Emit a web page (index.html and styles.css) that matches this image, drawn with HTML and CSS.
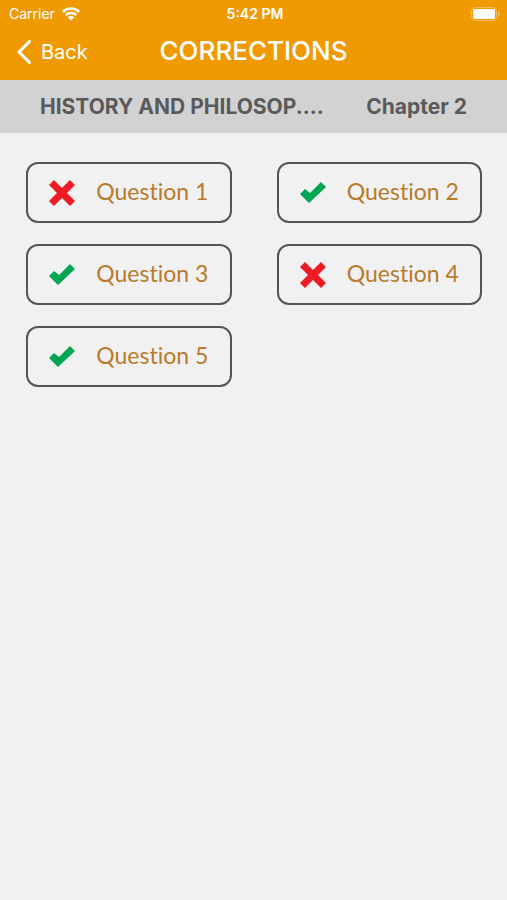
FILE: index.html
```
<!DOCTYPE html>
<html lang="en">
  <head>
    <meta charset="utf-8">
    <meta name="viewport" content="width=device-width, initial-scale=1">
    <title>Corrections</title>
    <link rel="stylesheet" href="styles.css">
  </head>
  <body>
    <!-- Icons shared by the question buttons -->
    <svg class="icon-defs" aria-hidden="true">
      <symbol id="icon-wrong" viewBox="0 0 26 26">
        <path d="M5 0L13 8L21 0L26 5L18 13L26 21L21 26L13 18L5 26L0 21L8 13L0 5Z"/>
      </symbol>
      <symbol id="icon-right" viewBox="0 0 26 26">
        <path d="M0 14L5 9L10 13L21 2L26 7L9 23Z"/>
      </symbol>
    </svg>

    <header class="header">
      <div class="status">
        <div class="status-left">
          <span>Carrier</span>
          <svg class="wifi" viewBox="0 0 18 14" aria-hidden="true">
            <path d="M0.8 4.9C5.4 0.4 12.6 0.4 17.2 4.9M3.7 8C6.7 5.2 11.3 5.2 14.3 8" fill="none" stroke="#fff" stroke-width="2.5"/>
            <path d="M5.7 10.3C7.6 8.6 10.4 8.6 12.3 10.3L9 13.6Z" fill="#fff"/>
          </svg>
        </div>
        <span class="time">5:42 PM</span>
        <svg class="battery" viewBox="0 0 30 14" aria-hidden="true">
          <rect x="0.5" y="0.5" width="25" height="13" rx="4" fill="none" stroke="#fff" stroke-opacity="0.35"/>
          <rect x="2" y="2" width="22" height="10" rx="2" fill="#fff"/>
          <path d="M27 5C29.4 5.6 29.4 8.4 27 9Z" fill="#fff" fill-opacity="0.4"/>
        </svg>
      </div>
      <div class="nav">
        <button class="back" type="button">
          <svg class="chevron" viewBox="0 0 14 24" aria-hidden="true">
            <path d="M12.5 1.5L2 12L12.5 22.5" fill="none" stroke="#fff" stroke-width="3" stroke-linecap="round" stroke-linejoin="round"/>
          </svg>
          <span>Back</span>
        </button>
        <h1 class="title">CORRECTIONS</h1>
      </div>
    </header>

    <div class="subject">
      <span>HISTORY AND PHILOSOP....</span>
      <span>Chapter 2</span>
    </div>

    <main class="questions">
      <button class="question" type="button">
        <svg class="mark wrong" aria-hidden="true"><use href="#icon-wrong"/></svg>
        <span class="label">Question 1</span>
      </button>
      <button class="question" type="button">
        <svg class="mark right" aria-hidden="true"><use href="#icon-right"/></svg>
        <span class="label">Question 2</span>
      </button>
      <button class="question" type="button">
        <svg class="mark right" aria-hidden="true"><use href="#icon-right"/></svg>
        <span class="label">Question 3</span>
      </button>
      <button class="question" type="button">
        <svg class="mark wrong" aria-hidden="true"><use href="#icon-wrong"/></svg>
        <span class="label">Question 4</span>
      </button>
      <button class="question" type="button">
        <svg class="mark right" aria-hidden="true"><use href="#icon-right"/></svg>
        <span class="label">Question 5</span>
      </button>
    </main>
  </body>
</html>
```
FILE: styles.css
```
* {
  box-sizing: border-box;
}

body {
  margin: 0;
  background-color: #f1f1f1;
  font-family: Inter, "Liberation Sans", sans-serif;
}

button {
  border: none;
  background: none;
  padding: 0;
  font: inherit;
  cursor: pointer;
}

svg {
  display: block;
  flex-shrink: 0;
}

/* Holds the symbols only, takes no space */
.icon-defs {
  position: absolute;
  width: 0;
  height: 0;
}

/* Orange header */
.header {
  background-color: #f09a03;
  color: #fff;
  padding-bottom: 7px;
}

/* Status bar */
.status {
  display: grid;
  grid-template-columns: 1fr auto 1fr;
  align-items: center;
  height: 27px;
  padding: 0 6px 0 9px;
  font-size: 14px;
}

.status-left {
  display: flex;
  align-items: center;
  gap: 7px;
}

.wifi {
  width: 18px;
  height: 14px;
}

.time {
  font-weight: 600;
}

.battery {
  width: 30px;
  height: 14px;
  justify-self: end;
}

/* Back button and page title */
.nav {
  display: grid;
  grid-template-columns: 1fr auto 1fr;
  align-items: center;
  height: 46px;
  padding: 0 17px;
}

.back {
  display: flex;
  align-items: center;
  gap: 10px;
  padding-top: 4px;
  color: #fff;
  font-size: 20px;
}

.chevron {
  width: 14px;
  height: 24px;
}

.title {
  margin: 0;
  font-size: 26px;
  font-weight: 500;
}

/* Grey subject bar */
.subject {
  display: flex;
  justify-content: space-between;
  align-items: center;
  height: 53px;
  padding: 0 40px;
  background-color: #d2d2d2;
  color: #5a5a5a;
  font-size: 21px;
  font-weight: 700;
}

/* Two columns of question buttons */
.questions {
  display: grid;
  grid-template-columns: 1fr 1fr;
  gap: 21px 45px;
  padding: 29px 25px 29px 26px;
}

.question {
  display: flex;
  align-items: center;
  justify-content: center;
  gap: 21px;
  height: 61px;
  border: 2px solid #555;
  border-radius: 12px;
  color: #b97a2b;
  font-family: Lato, sans-serif;
  font-size: 23px;
}

.label {
  padding-bottom: 3px;
  font-variant-ligatures: none;
}

.mark {
  width: 26px;
  height: 26px;
}

.wrong {
  fill: #ed1c24;
}

.right {
  fill: #00a651;
}
```
